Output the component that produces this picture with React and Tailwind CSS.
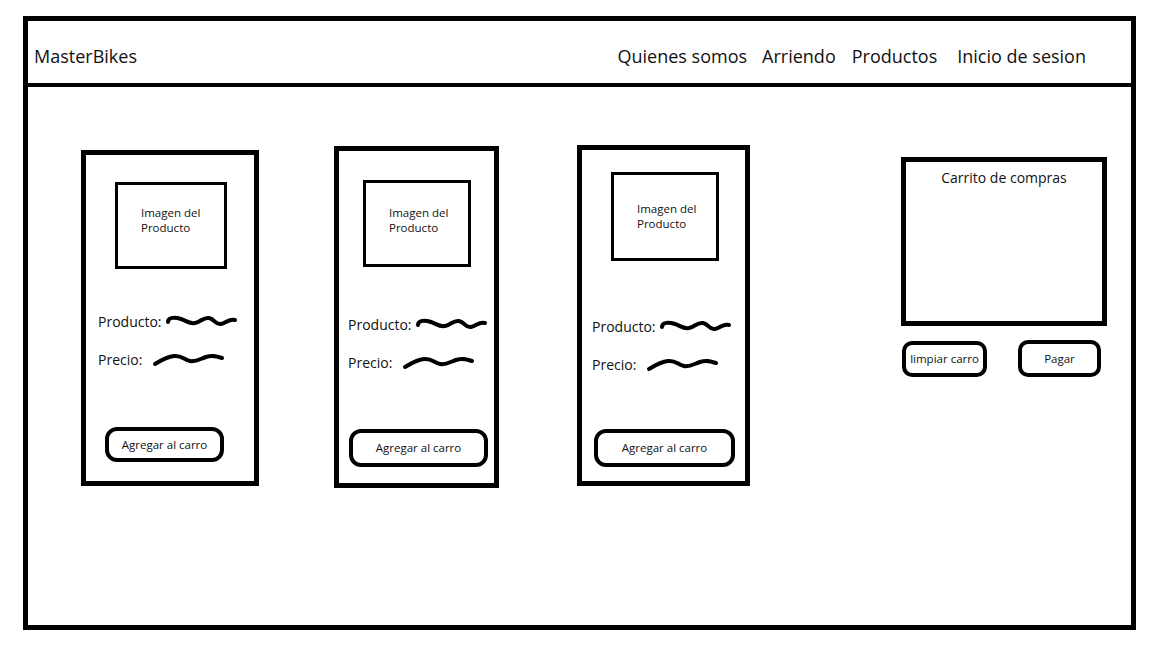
const font = { fontFamily: '"Open Sans", "Noto Sans", sans-serif' };

function NameSquiggle() {
  return (
    <svg width="74" height="16" viewBox="0 0 74 16" className="shrink-0">
      <path
        d="M3 9 C3 4, 10 4, 16 6 C22 8, 24 11, 30 10 C36 9, 38 4, 44 5 C50 6, 50 12, 56 11 C62 10, 64 5, 70 7"
        fill="none"
        stroke="black"
        strokeWidth="4"
        strokeLinecap="round"
      />
    </svg>
  );
}

function PriceSquiggle() {
  return (
    <svg width="74" height="16" viewBox="0 0 74 16" className="shrink-0">
      <path
        d="M3 13 C8 10, 14 6, 22 5 C30 4, 32 9, 38 10 C44 11, 48 8, 54 6 C60 4, 64 5, 70 7"
        fill="none"
        stroke="black"
        strokeWidth="4"
        strokeLinecap="round"
      />
    </svg>
  );
}

function ProductCard({ card }) {
  return (
    <div className={`flex flex-col border-[5px] border-black ${card.box}`}>
      <div
        className={`border-[3px] border-black pl-[23px] text-[11.5px] leading-[15px] text-[#111] ${card.img}`}
      >
        <div>Imagen del</div>
        <div>Producto</div>
      </div>
      <div className={`flex items-center h-[20px] text-[14px] ${card.name}`}>
        <span>Producto:</span>
        <span className="ml-[3px]">
          <NameSquiggle />
        </span>
      </div>
      <div className={`flex items-center h-[20px] text-[14px] mt-[18px] ${card.price}`}>
        <span>Precio:</span>
        <span className="ml-[10px]">
          <PriceSquiggle />
        </span>
      </div>
      <button
        className={`flex items-center justify-center border-4 border-black rounded-[12px] text-[11.5px] bg-white ${card.btn}`}
      >
        Agregar al carro
      </button>
    </div>
  );
}

const cards = [
  {
    box: "w-[178px] h-[336px] mt-[63px]",
    img: "ml-[29px] mt-[27px] w-[112px] h-[87px] pt-[20px]",
    name: "ml-[12px] mt-[42px]",
    price: "ml-[12px]",
    btn: "ml-[19px] mt-[58px] w-[119px] h-[35px]",
  },
  {
    box: "w-[165px] h-[342px] mt-[59px] ml-[75px]",
    img: "ml-[24px] mt-[29px] w-[108px] h-[87px] pt-[22px]",
    name: "ml-[9px] mt-[47px]",
    price: "ml-[9px]",
    btn: "ml-[10px] mt-[57px] w-[139px] h-[38px]",
  },
  {
    box: "w-[173px] h-[341px] mt-[58px] ml-[78px]",
    img: "ml-[29px] mt-[22px] w-[108px] h-[89px] pt-[26px]",
    name: "ml-[10px] mt-[55px]",
    price: "ml-[10px]",
    btn: "ml-[12px] mt-[55px] w-[141px] h-[38px]",
  },
];

export default function App() {
  return (
    <div className="w-[1152px] h-[648px] bg-white text-[#111] overflow-hidden" style={font}>
      <div className="ml-[23px] mt-[16px] w-[1113px] h-[614px] border-[5px] border-black flex flex-col">
        {/* Header */}
        <header className="h-[66px] shrink-0 border-b-4 border-black flex items-center pl-[6px] pr-[45px] text-[18px]">
          <span className="pt-[8px]">MasterBikes</span>
          <nav className="ml-auto flex pt-[8px]">
            <a className="mr-[15px]">Quienes somos</a>
            <a className="mr-[16px]">Arriendo</a>
            <a className="mr-[20px]">Productos</a>
            <a>Inicio de sesion</a>
          </nav>
        </header>

        {/* Body */}
        <main className="flex items-start pl-[53px]">
          {cards.map((c, i) => (
            <ProductCard key={i} card={c} />
          ))}

          {/* Cart */}
          <div className="ml-[151px] mt-[70px] w-[206px]">
            <div className="h-[169px] border-[5px] border-black text-center text-[14px] pt-[5px]">
              Carrito de compras
            </div>
            <div className="flex mt-[15px]">
              <button className="ml-[1px] w-[85px] h-[36px] border-4 border-black rounded-[10px] text-[11.5px] bg-white">
                limpiar carro
              </button>
              <button className="ml-[31px] -mt-[1px] w-[83px] h-[37px] border-4 border-black rounded-[10px] text-[11.5px] bg-white">
                Pagar
              </button>
            </div>
          </div>
        </main>
      </div>
    </div>
  );
}
